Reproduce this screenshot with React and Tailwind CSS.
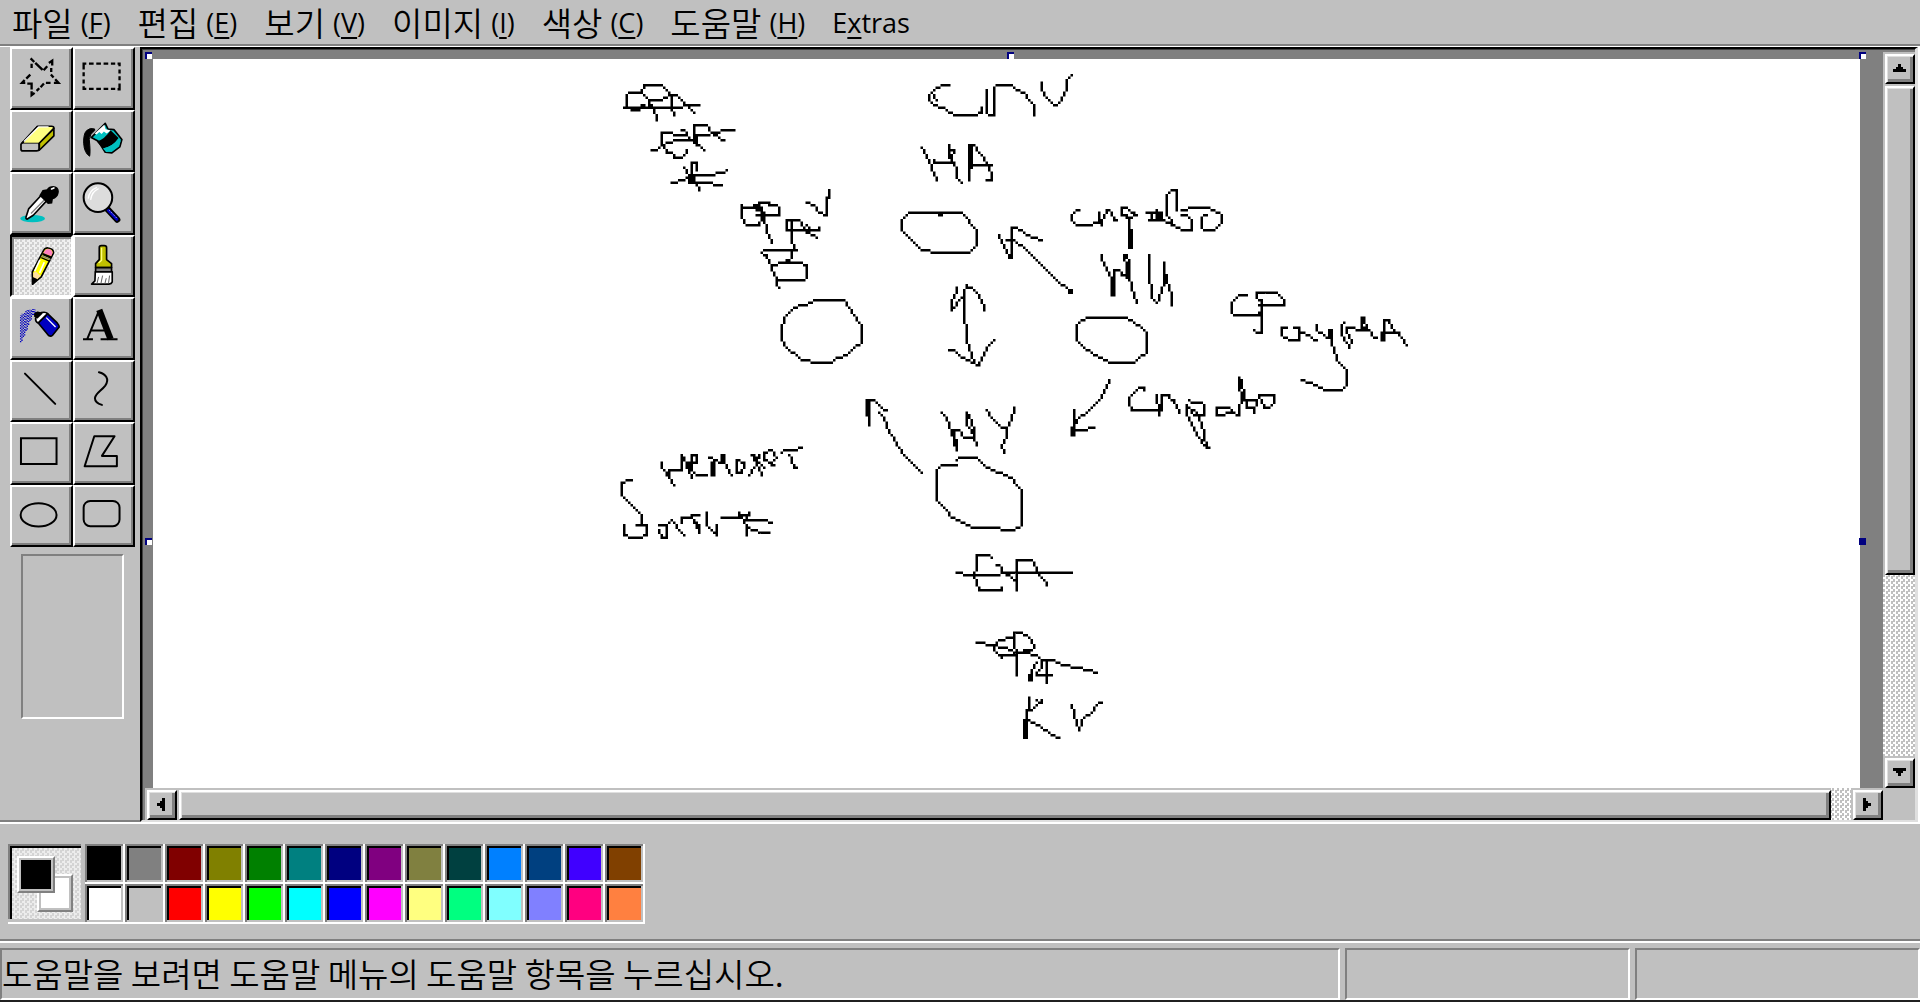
import React from "react";

const MENUS = [
  { label: "파일", key: "F" },
  { label: "편집", key: "E" },
  { label: "보기", key: "V" },
  { label: "이미지", key: "I" },
  { label: "색상", key: "C" },
  { label: "도움말", key: "H" },
];

const COLORS = [
  "#000000", "#808080", "#800000", "#808000", "#008000", "#008080", "#000080", "#800080",
  "#808040", "#004040", "#0080ff", "#004080", "#4000ff", "#804000",
  "#ffffff", "#c0c0c0", "#ff0000", "#ffff00", "#00ff00", "#00ffff", "#0000ff", "#ff00ff",
  "#ffff80", "#00ff80", "#80ffff", "#8080ff", "#ff0080", "#ff8040",
];

const line = { fill: "none", stroke: "#000", strokeWidth: 6, strokeLinejoin: "round", strokeLinecap: "round" };

const TOOLS = [
  {
    name: "Free-Form Select",
    box: "36 26 176 176",
    art: (
      <path fill="none" stroke="#000" strokeWidth="7" d="M92 54l11 11M95 70v13M106 68l22 21M131 90l11-12M147 68l10-7v15M154 83v12M153 103l8 9M166 117l10 11h-14M152 128h-14M132 130l-10 11M118 144l-8 8M104 158l-9 7v-12M95 148v-18h-13M76 128h-10l8-9M79 115l12-12" />
    ),
  },
  {
    name: "Select",
    box: "225 26 176 176",
    art: (
      <path fill="none" stroke="#000" strokeWidth="7" d="M251 80V70h8M267 70h14M289 70h14M311 70h14M333 70h13M353 70h6v8M359 88v12M359 108v12M359 130v17h-6M346 146h-13M325 146h-14M303 146h-14M281 146h-14M259 146h-8v-8M251 130v-12M251 108v-12M251 88v-8" />
    ),
  },
  {
    name: "Eraser/Color Eraser",
    box: "36 213 176 176",
    art: (
      <g stroke="#000" strokeWidth="5" strokeLinejoin="round">
        <path fill="#ffff80" d="M65 308l48-52h42q8 0 7 6l-44 46z" />
        <path fill="#c0c0c0" stroke="none" d="M64 308h52v22H64z" />
        <path fill="#c0c000" d="M118 307l44-44v22l-44 43z" />
        <path fill="none" d="M118 307v18q-1 5-8 5H68q-5 0-5-6v-14l50-54" />
        <path fill="none" stroke="#fff" strokeWidth="4" d="M72 302l44-44h30" />
      </g>
    ),
  },
  {
    name: "Fill With Color",
    box: "225 213 176 176",
    art: (
      <g stroke="#000" strokeWidth="5" strokeLinejoin="round">
        <path fill="#00c0c0" d="M274 290l42-43 8 17 18 2 24 30-6 22-24 18-20-2-22-34z" />
        <path fill="#fff" stroke="none" d="M284 278l29-27 4 14 16 4-13 9-8-6-7 7-7-6-8 8z" />
        <path d="M290 302q24-6 42-34l24 23q-18 26-46 32z" stroke="none" />
        <path fill="#00c0c0" stroke="none" d="M309 323q30-8 50-28l3 6-5 14-22 17-16 1z" />
        <path d="M284 264q-14-5-24 5-10 10-9 38 2 30 18 39 3-12-1-50 2-18 16-27z" strokeWidth="3" />
      </g>
    ),
  },
  {
    name: "Pick Color",
    box: "36 400 176 176",
    art: (
      <g strokeLinejoin="round">
        <ellipse cx="98" cy="534" rx="37" ry="11" fill="#00c0c0" />
        <path fill="#fff" stroke="#000" strokeWidth="5" d="M124 464l16 17-40 43-19 12q-4-1-3-6l8-25z" />
        <path fill="none" stroke="#808080" strokeWidth="4" d="M133 478l-40 41" />
        <path d="M128 448l13-2q6-10 19-10 16 1 17 16 0 14-12 22l-6 2-2 13-13 1-26-25z" />
        <path d="M155 445l7-3" stroke="#fff" strokeWidth="5" strokeLinecap="round" />
      </g>
    ),
  },
  {
    name: "Magnifier",
    box: "225 400 176 176",
    art: (
      <g>
        <path d="M322 505l30 32" stroke="#000" strokeWidth="19" strokeLinecap="round" />
        <path d="M325 509l26 27" stroke="#0000c0" strokeWidth="9" strokeLinecap="round" />
        <path d="M328 509l23 24" stroke="#fff" strokeWidth="2" strokeDasharray="4 3" />
        <circle cx="294" cy="471" r="43" fill="#dcdcdc" stroke="#000" strokeWidth="6" />
        <path d="M265 474q2-24 26-34M272 478q3-25 24-34" fill="none" stroke="#fff" strokeWidth="4" />
      </g>
    ),
  },
  {
    name: "Pencil",
    box: "36 588 176 176",
    pressed: true,
    art: (
      <g stroke="#000" strokeWidth="5" strokeLinejoin="round">
        <path fill="#ffff00" d="M131 628q5-9 14-7 17 3 16 15l-37 72-26 22-1-36z" />
        <path fill="#ff80c0" stroke="none" d="M134 630q4-7 12-6 12 3 12 12l-4 9-24-8z" />
        <path fill="none" strokeWidth="7" d="M128 639l26 11" />
        <path fill="none" stroke="#808080" strokeWidth="4" d="M126 645l26 11" />
        <path fill="none" strokeWidth="4" d="M124 650l26 11" />
        <path fill="none" stroke="#fff" strokeWidth="5" d="M120 657l-16 34M133 664l-14 32" />
        <path fill="#ffe0a0" stroke="none" d="M100 696l8-4 8 8 7 4-12 12h-11z" />
        <path d="M99 711l10 5-11 13z" />
      </g>
    ),
  },
  {
    name: "Brush",
    box: "225 588 176 176",
    art: (
      <g stroke="#000" strokeWidth="5" strokeLinejoin="round">
        <path fill="#c0c000" d="M298 620q0-6 6-6h9q7 0 7 6v36l15 12v12h-48v-12l11-12z" />
        <path fill="none" stroke="#ffff80" strokeWidth="4" d="M305 620v38l-9 8" />
        <path fill="#808080" d="M287 680h48v13h-48z" />
        <path fill="#fff" d="M286 693h51v30q-2 6-10 7h-52l10-10z" />
        <path fill="none" strokeWidth="3" stroke="#606060" d="M291 728l5-20M303 728l5-24M315 728l4-16M326 726l3-22" />
      </g>
    ),
  },
  {
    name: "Airbrush",
    box: "36 26 176 176",
    art: (
      <g stroke="#000" strokeWidth="5" strokeLinejoin="round">
        <path fill="none" stroke="#0000c0" strokeWidth="4" strokeDasharray="4 4" d="M62 156V74M66 152V70M70 140V68M74 136V68M78 122V62M82 118V60M86 104V58M90 92V58M94 88V58M98 74V56M102 74V56M106 68V58" />
        <path fill="#0000c0" d="M115 98l28-28 29 28q7 8 6 12l-20 25q-5 5-12 1z" />
        <path fill="#fff" d="M107 84l17-17q14-3 19 3l-28 28q-9-3-8-14z" />
        <path d="M105 70l8-4 12 3-13 13-7-4z" />
        <path fill="none" stroke="#fff" strokeWidth="4" d="M139 82l28 28" />
      </g>
    ),
  },
  {
    name: "Text",
    box: "225 26 176 176",
    art: (
      <g>
        <path fill="none" stroke="#000" strokeWidth="6" d="M262 146l33-80M272 121h42M249 147h30M302 147h51" />
        <path fill="none" stroke="#000" strokeWidth="19" d="M298 59l34 88" />
      </g>
    ),
  },
  { name: "Line", box: "36 213 176 176", art: <path {...line} d="M75 248l91 91" /> },
  {
    name: "Curve",
    box: "225 213 176 176",
    art: <path {...line} d="M297 244c20 5 33 20 19 40-12 16-30 24-31 38 0 13 11 17 21 20" />,
  },
  { name: "Rectangle", box: "36 400 176 176", art: <path {...line} strokeLinejoin="miter" d="M63 443h107v77H63z" /> },
  { name: "Polygon", box: "225 400 176 176", art: <path {...line} d="M283 437h61l-38 59h45v31h-97z" /> },
  { name: "Ellipse", box: "36 588 176 176", art: <ellipse {...line} cx="116" cy="672" rx="54" ry="35" /> },
  { name: "Rounded Rectangle", box: "225 588 176 176", art: <rect {...line} x="251" y="630" width="108" height="76" rx="20" /> },
];

/* Freehand strokes, in four patches; each has an origin on the page and its own units per pixel. */
const PATCHES = [
  {
    x: 600, y: 70, sx: 3, sy: 3,
    strokes: [
      "80,112 80,75 90,67 124,67 136,72 143,85 149,98 160,115 163,125 169,138 170,152",
      "124,67 124,57 132,45 184,45 190,52 212,74 232,76 254,101 271,116 284,128",
      "145,90 186,90 190,84 202,80 212,74",
      "215,76 215,112 222,136",
      "70,113 245,113 262,105 298,105",
      "92,119 118,119",
      "122,105 135,105",
      "149,98 149,112",
      "155,241 168,241 180,230 187,228 210,218 235,211 280,208 286,196 330,196 345,188 358,187 362,181 402,181",
      "184,228 184,188 218,188 226,195 250,195",
      "187,228 198,238 203,247 216,250 226,260 246,263 256,257 261,240",
      "243,181 254,182 270,203 285,215 298,228 310,241",
      "283,205 283,166 320,166 335,185 350,193 358,203 372,211",
      "288,205 290,215 303,236",
      "275,330 275,278 290,278 290,302",
      "252,292 260,310 272,325 290,345 300,360",
      "215,338 230,338 245,328 265,322",
      "265,316 345,316 352,308 370,305 380,299",
      "268,338 333,338 342,346 366,346",
      "268,320 268,336",
      "282,318 282,338",
      "427,405 427,445 440,465 478,465 482,440 486,420",
      "427,405 430,412 455,416 486,418",
      "462,405 475,405 478,398 505,398 510,405 530,405 538,420 538,435 470,435",
      "465,412 488,412 490,440 497,478 505,500 514,517",
      "620,398 640,407 652,420 665,430 678,435 680,385 688,380 690,360",
      "560,482 560,450 598,450 602,465 610,478 628,488 640,492 650,502",
      "560,480 655,480 658,472",
      "572,455 572,485 575,510 582,540 590,540",
      "618,466 630,480",
      "486,548 495,541 582,541",
      "577,543 577,562 568,572 540,577 530,584 515,586",
      "486,548 498,556 506,575 518,595 522,612 530,630 530,645 538,652",
      "540,577 605,577 620,585 620,622 608,630 532,630",
      "640,690 735,690 742,707 760,738 775,758 785,768 785,818 765,835 740,858 708,864 696,878 635,878 628,871 605,868 590,858 570,842 556,822 546,803 546,770 555,742 575,722 598,705 622,704 640,690",
    ],
  },
  {
    x: 880, y: 60, sx: 3, sy: 3,
    strokes: [
      "208,75 184,75 168,82 152,95 148,105 148,122 162,132 190,144 210,155 230,165 292,165 298,158 305,155 304,142",
      "152,95 165,112 170,122",
      "320,88 320,155 328,165 343,165 343,80 348,75 396,75 405,85 432,100 440,112 456,128 462,142 462,166",
      "484,68 488,88 500,110 518,128 530,136 538,128 550,105 558,82 560,62 575,44",
      "124,262 135,275 148,298 158,322 162,342 170,350 170,360",
      "158,322 162,300 172,307 212,307 218,300",
      "208,255 208,290",
      "208,262 220,272 218,300 228,330 232,352 244,366",
      "267,362 267,256",
      "273,322 273,256 282,256 290,268 308,285 318,305 326,325 333,350 333,360 318,360",
      "272,315 336,315",
      "94,458 245,458 262,470 270,490 286,505 290,520 290,558 275,567 262,577 152,577 142,571 125,568 108,552 88,532 75,518 65,503 65,482 78,468 94,458",
      "176,463 186,463",
      "357,525 366,545 378,572 388,594 396,594 396,503 408,503 430,515 450,525 465,535 484,542",
      "378,540 405,543 440,570 540,668 558,686 575,694",
      "565,697 575,697",
      "230,682 228,700 216,720 216,750 225,742 235,722 250,716",
      "252,790 252,700 262,676 276,682 290,695 305,718 312,750",
      "252,790 260,795 260,848 270,865 278,890 290,915 298,912 312,880 325,856 342,840",
      "205,870 222,871 240,885 262,902 280,905",
      "625,773 740,773 765,785 785,800 800,820 800,878 780,895 765,908 685,908 675,901 655,895 635,880 610,862 600,845 590,838 590,795 605,782 625,773",
    ],
  },
  {
    x: 1050, y: 180, sx: 3, sy: 3,
    strokes: [
      "90,90 78,92 68,102 65,118 75,130 88,135 128,135 135,128 148,126 154,130",
      "148,95 148,130",
      "154,136 156,118 168,92 180,92 182,105 192,120 202,120",
      "215,108 213,85 230,83 235,92 250,95 260,105 240,113 220,105",
      "230,110 238,125 238,205",
      "244,150 244,205",
      "288,97 335,97",
      "295,120 335,120",
      "308,100 308,118",
      "320,90 320,118",
      "325,100 340,118 350,126 372,135 385,140 395,151 425,151 425,118 412,106 395,104",
      "318,105 330,105",
      "318,112 336,112",
      "380,92 380,30 365,30 352,45 350,108 362,120 366,130",
      "392,92 412,90 416,83 480,83 490,90 508,98 515,110 515,126 495,150 465,150 455,142 455,112 470,104",
      "153,222 158,240 170,260 178,285 186,290 186,346",
      "192,346 192,272 208,270 215,283 235,290",
      "222,225 222,242 230,250 230,290",
      "228,225 240,252 240,290 246,325 252,350 262,368",
      "297,222 297,308 305,325 308,352 320,370 330,360 335,320 342,312 342,246",
      "342,270 350,300 356,330 364,345 364,378",
      "178,598 168,620 154,652 120,688 90,715 72,735 68,765",
      "72,690 72,765",
      "72,750 108,750 118,743 132,743",
      "64,742 64,765",
      "592,345 565,345 550,362 544,375 544,398 556,405 628,405 630,395",
      "618,340 682,338 690,345 700,360 700,376 630,376",
      "618,340 622,350 632,362 634,380 634,458 620,458 610,450",
      "712,443 694,443 694,465 708,470 715,480 746,480 746,443 730,443",
      "746,450 762,460 785,472 800,480",
      "798,434 802,450 815,460 830,474 842,470",
      "842,450 842,490 850,510 860,540 880,560 888,580 888,615 875,630 822,630 800,616 780,610 752,600",
      "836,450 836,470",
      "882,428 875,440 875,465 888,490 900,503 904,480 890,455 890,445 912,445 930,450 955,452 965,465 980,473",
      "936,412 936,440 950,440 942,415",
      "950,440 965,460",
      "999,480 999,420 1015,420 1025,440 1040,458 1052,470 1062,485 1070,495",
      "997,458 1045,458",
      "993,460 993,480",
      "282,630 280,622 265,622 250,635 238,650 236,678 248,690 325,690",
      "320,645 320,665 328,680 328,706",
      "332,690 334,645 355,645 360,655 375,662 382,680 388,698",
      "415,660 430,665 455,670 462,680 462,704 435,704 428,690 415,685 410,675",
      "410,675 410,705 425,735 440,768 460,795 478,804",
      "430,690 445,715 458,735 464,765 470,800",
      "500,683 500,706 525,706 535,700 548,695 568,706 566,680",
      "500,683 535,683 545,692",
      "568,678 575,665 568,595 578,600 580,660 600,662 618,662",
      "590,665 590,680 605,685 612,698",
      "618,668 612,690",
      "628,645 672,645 672,668 660,684 640,684 632,660 628,645",
    ],
  },
  {
    x: 600, y: 380, sx: 2.8, sy: 3,
    strokes: [
      "753,138 753,60 765,62 780,75 790,85 804,90",
      "746,62 746,108",
      "783,98 795,115 800,140 815,165 828,198 850,225 870,245 900,280",
      "957,97 968,115 978,140 988,160 990,190 999,212",
      "985,150 1005,150 1012,162 1030,170 1045,172",
      "1028,97 1028,135 1040,150 1045,180 1055,198",
      "1028,97 1042,120 1048,165",
      "995,155 997,205",
      "1080,90 1100,110 1115,135 1135,142",
      "1162,82 1162,95 1150,115 1142,150 1138,175 1126,200 1130,216",
      "1000,255 955,255 942,268 942,360 965,385 985,412 1020,428 1048,440 1118,442 1125,450 1160,450 1180,436 1180,330 1165,312 1150,292 1118,280 1085,265 1055,234 1005,234 998,242",
      "172,246 174,265 190,275 195,295 207,315",
      "188,285 195,270 228,270 230,225",
      "228,225 240,255 258,292",
      "250,262 256,228 270,228 268,250 256,250 258,270 272,286 300,286",
      "318,286 318,240 305,235",
      "305,235 340,245 342,225 350,228 350,250 360,275 370,288",
      "310,250 312,286",
      "383,240 383,280 400,280 402,245 383,240",
      "425,225 440,255 455,285",
      "443,225 440,255 418,286",
      "435,225 448,250 458,265",
      "462,215 460,240 478,248 495,235 490,215 475,208 462,215",
      "475,250 490,255",
      "508,218 520,211 550,211 555,203 568,203",
      "530,225 538,240 542,262 552,263",
      "92,300 75,300 60,308 60,345 80,370 112,400 118,415 118,430 130,440 130,465 105,470 82,473 68,465 68,433",
      "100,437 128,437",
      "163,437 187,437 187,470 170,470 165,450",
      "187,437 202,422 205,430 225,450 235,465",
      "228,425 230,412 248,412 255,405 280,405",
      "255,410 265,430 278,458",
      "270,430 278,440",
      "298,396 298,435 310,450 325,468 325,435",
      "338,411 395,411 405,420 470,420 475,428 484,428",
      "390,398 402,420 418,398",
      "390,405 418,405",
      "402,420 410,440 410,468",
      "402,430 412,445 440,450 450,458 476,458",
      "997,577 1012,577 1018,585 1118,585 1125,577 1322,577",
      "1098,532 1090,524 1055,524 1055,570 1048,575 1048,590 1055,610 1065,630 1124,630 1124,620",
      "1108,555 1120,558 1130,575 1150,595 1165,608",
      "1167,632 1167,540 1208,540 1220,560 1232,585 1245,600 1250,616",
      "1053,788 1078,788 1085,796 1105,797 1130,805 1165,815 1190,818 1222,826 1240,838 1270,840 1280,848 1300,855 1340,862 1370,870 1392,878",
      "1125,832 1108,815 1103,800 1118,780 1150,775 1160,757 1182,757 1195,766 1212,778 1216,800 1200,812 1170,818",
      "1167,888 1167,810 1158,805 1158,760",
      "1120,825 1165,825",
      "1250,910 1250,842",
      "1225,885 1266,885",
      "1222,845 1212,870 1203,900",
      "1235,845 1235,865 1222,880",
      "1209,880 1209,900",
      "1200,950 1200,985 1190,1030 1190,1075",
      "1195,990 1195,1075",
      "1195,1018 1215,1030 1240,1045 1260,1060 1285,1074",
      "1235,960 1225,975 1208,990",
      "1222,962 1235,968",
      "1320,973 1325,1000 1335,1035 1340,1050 1350,1020 1375,995 1390,978 1405,966",
    ],
  },
];

const CELL = 2.5;
const ORIGIN = { x: 153, y: 59 };

/* Turns the strokes into square pixels of CELL size, as a one-pixel pencil leaves them. */
function rasterize(patches) {
  const lit = new Set();
  for (const p of patches) {
    for (const s of p.strokes) {
      const pts = s.split(" ").map((pair) => {
        const [x, y] = pair.split(",").map(Number);
        return [
          Math.floor((p.x + x / p.sx - ORIGIN.x) / CELL),
          Math.floor((p.y + y / p.sy - ORIGIN.y) / CELL),
        ];
      });
      for (let i = 1; i < pts.length; i++) {
        let [x, y] = pts[i - 1];
        const [x1, y1] = pts[i];
        const dx = Math.abs(x1 - x);
        const dy = -Math.abs(y1 - y);
        const stepX = x < x1 ? 1 : -1;
        const stepY = y < y1 ? 1 : -1;
        let err = dx + dy;
        for (;;) {
          lit.add(x + " " + y);
          if (x === x1 && y === y1) break;
          const e2 = 2 * err;
          if (e2 >= dy) { err += dy; x += stepX; }
          if (e2 <= dx) { err += dx; y += stepY; }
        }
      }
    }
  }
  return [...lit].map((c) => `M${c}h1v1h-1z`).join("");
}

const DRAWING = rasterize(PATCHES);

function Tool({ tool }) {
  const look = tool.pressed
    ? "border-black border-r-white border-b-white shadow-[inset_2px_2px_0_#808080] bg-[repeating-conic-gradient(#f0f0f0_0_25%,#d0d0d0_0_50%)] bg-[length:5px_5px]"
    : "border-white border-r-black border-b-black shadow-[inset_-2px_-2px_0_#808080]";
  return (
    <button type="button" aria-label={tool.name} aria-pressed={!!tool.pressed} className={`min-h-0 min-w-0 border-2 ${look}`}>
      <svg viewBox={tool.box} className="block h-full w-full">{tool.art}</svg>
    </button>
  );
}

const ARROWS = {
  up: "M2 0h1v1h1v1h1v1H0V2h1V1h1z",
  down: "M0 0h5v1H4v1H3v1H2V2H1V1H0z",
  left: "M2 0h1v5H2V4H1V3H0V2h1V1h1z",
  right: "M0 0h1v1h1v1h1v1H2v1H1v1H0z",
};

const RAISED = "border-2 border-white border-r-black border-b-black shadow-[inset_1px_1px_0_#dfdfdf,inset_-3px_-3px_0_#808080] bg-[#c0c0c0]";

function ScrollButton({ dir }) {
  const upright = dir === "up" || dir === "down";
  return (
    <div className="size-8 shrink-0 bg-[#c0c0c0] pt-0.5 pl-0.5">
      <button type="button" aria-label={`Scroll ${dir}`} className={`flex h-full w-full items-center justify-center pr-0.5 pb-0.5 ${RAISED}`}>
        <svg viewBox={upright ? "0 0 5 3" : "0 0 3 5"} shapeRendering="crispEdges" className={upright ? "h-2 w-[13px]" : "h-[13px] w-2"}>
          <path d={ARROWS[dir]} />
        </svg>
      </button>
    </div>
  );
}

const TRACK = "bg-[repeating-conic-gradient(#ffffff_0_25%,#c0c0c0_0_50%)] bg-[length:5px_5px]";

function Handle({ place, solid }) {
  return (
    <span className={`absolute size-[7px] border-t-2 border-l-2 border-[#000080] ${solid ? "bg-[#000080]" : "bg-white"} ${place}`} />
  );
}

function Workspace() {
  return (
    <section className="grid min-w-0 flex-1 grid-cols-[minmax(0,1fr)_32px] grid-rows-[minmax(0,1fr)_32px] border-t-2 border-r-[3px] border-b-2 border-l-2 border-black border-r-[#dfdfdf] border-b-[#dfdfdf] bg-[#808080] pt-[3px] pl-[3px] shadow-[inset_1px_1px_0_#404040]">
      <div className="relative flex min-h-0 pt-[7px] pr-[23px] pl-2">
        <div className="min-w-0 flex-1 overflow-hidden bg-white">
          <svg viewBox="0 0 600 290" className="block h-[725px] w-[1500px]" role="img" aria-label="Pencil drawing">
            <path d={DRAWING} />
          </svg>
        </div>
        <Handle place="top-0 left-0" />
        <Handle place="top-0 left-1/2 -translate-x-full" />
        <Handle place="top-0 right-[17px]" />
        <Handle place="top-[66%] left-0" />
        <Handle place="top-[66%] right-[17px]" solid />
      </div>
      <div className="flex min-h-0 flex-col">
        <ScrollButton dir="up" />
        <div className={`flex min-h-0 flex-1 flex-col ${TRACK}`}>
          <div className="h-[73%] bg-[#c0c0c0] pt-0.5 pl-0.5">
            <div className={`h-full ${RAISED}`} />
          </div>
        </div>
        <ScrollButton dir="down" />
      </div>
      <div className="flex min-w-0">
        <ScrollButton dir="left" />
        <div className={`min-w-0 flex-1 pr-5 ${TRACK}`}>
          <div className="h-full bg-[#c0c0c0] pt-0.5 pl-0.5">
            <div className={`h-full ${RAISED}`} />
          </div>
        </div>
        <ScrollButton dir="right" />
      </div>
      <div className="bg-[#c0c0c0]" />
    </section>
  );
}

function Palette() {
  return (
    <section className="border-b-2 border-[#808080] pt-5 pb-[15px] pl-2">
      <div className="flex">
        <div className="w-[77px] border-b-2 border-white bg-[#c0c0c0] pr-1 pb-[3px]">
          <div className="relative h-full border-t-2 border-l-2 border-[#808080]">
            <div className="h-full border-t-2 border-l-2 border-black bg-[repeating-conic-gradient(#ececec_0_25%,#d4d4d4_0_50%)] bg-[length:5px_5px]" />
            <span className="absolute top-7 left-[27px] h-[38px] w-9 border-2 border-white border-r-[#808080] border-b-[#808080] bg-white shadow-[inset_0_0_0_2px_#c0c0c0]" />
            <span className="absolute top-2.5 left-[7px] h-[37px] w-[38px] border-2 border-white border-r-[#808080] border-b-[#808080] bg-black shadow-[inset_0_0_0_2px_#c0c0c0]" />
          </div>
        </div>
        <div className="grid grid-cols-[repeat(14,40px)] grid-rows-[repeat(2,40px)]">
          {COLORS.map((c) => (
            <div key={c} className="border-r-2 border-b-2 border-white">
              <div className="h-full border-t-2 border-l-2 border-[#808080] pr-0.5 pb-0.5">
                <button type="button" aria-label={c} className="block h-full w-full border-t-2 border-l-2 border-black" style={{ backgroundColor: c }} />
              </div>
            </div>
          ))}
        </div>
      </div>
    </section>
  );
}

export default function App() {
  return (
    <div className="flex h-screen flex-col bg-[#c0c0c0] font-['Noto_Sans_CJK_KR',sans-serif] text-black">
      <nav className="flex h-[46px] shrink-0 items-center gap-[27px] border-b-2 border-[#808080] pl-3 leading-none">
        {MENUS.map((m) => (
          <button type="button" key={m.key} className="flex items-center gap-2 whitespace-nowrap">
            <span className="text-[33px] font-[350]">{m.label}</span>
            <span className="font-['Open_Sans','Noto_Sans',sans-serif] text-[27px] font-normal">
              (<span className="underline decoration-2 underline-offset-4">{m.key}</span>)
            </span>
          </button>
        ))}
        <button type="button" className="font-['Open_Sans','Noto_Sans',sans-serif] text-[27px] font-normal">
          E<span className="underline decoration-2 underline-offset-4">x</span>tras
        </button>
      </nav>

      <main className="flex min-h-0 flex-1 border-t border-r-2 border-b-2 border-white">
        <aside className="w-[140px] shrink-0 border-b-2 border-[#808080] pl-2.5">
          <div className="grid h-[500px] w-[125px] grid-cols-2 grid-rows-8">
            {TOOLS.map((t) => <Tool key={t.name} tool={t} />)}
          </div>
          <div className="mt-[7px] ml-[11px] h-[165px] w-[103px] border-2 border-[#808080] border-r-white border-b-white" />
        </aside>
        <Workspace />
      </main>

      <Palette />

      <footer className="flex shrink-0 gap-[5px] border-t-2 border-b-2 border-white border-b-[#202020] pt-[5px]">
        <p className="flex h-[52px] min-w-0 flex-1 items-center border-2 border-[#808080] border-r-white border-b-white pb-0.5 text-[33px] leading-none font-[350] whitespace-nowrap">
          도움말을 보려면 도움말 메뉴의 도움말 항목을 누르십시오.
        </p>
        <div className="h-[52px] w-[285px] border-2 border-[#808080] border-r-white border-b-white" />
        <div className="h-[52px] w-[285px] border-2 border-[#808080] border-r-white border-b-white" />
      </footer>
    </div>
  );
}
